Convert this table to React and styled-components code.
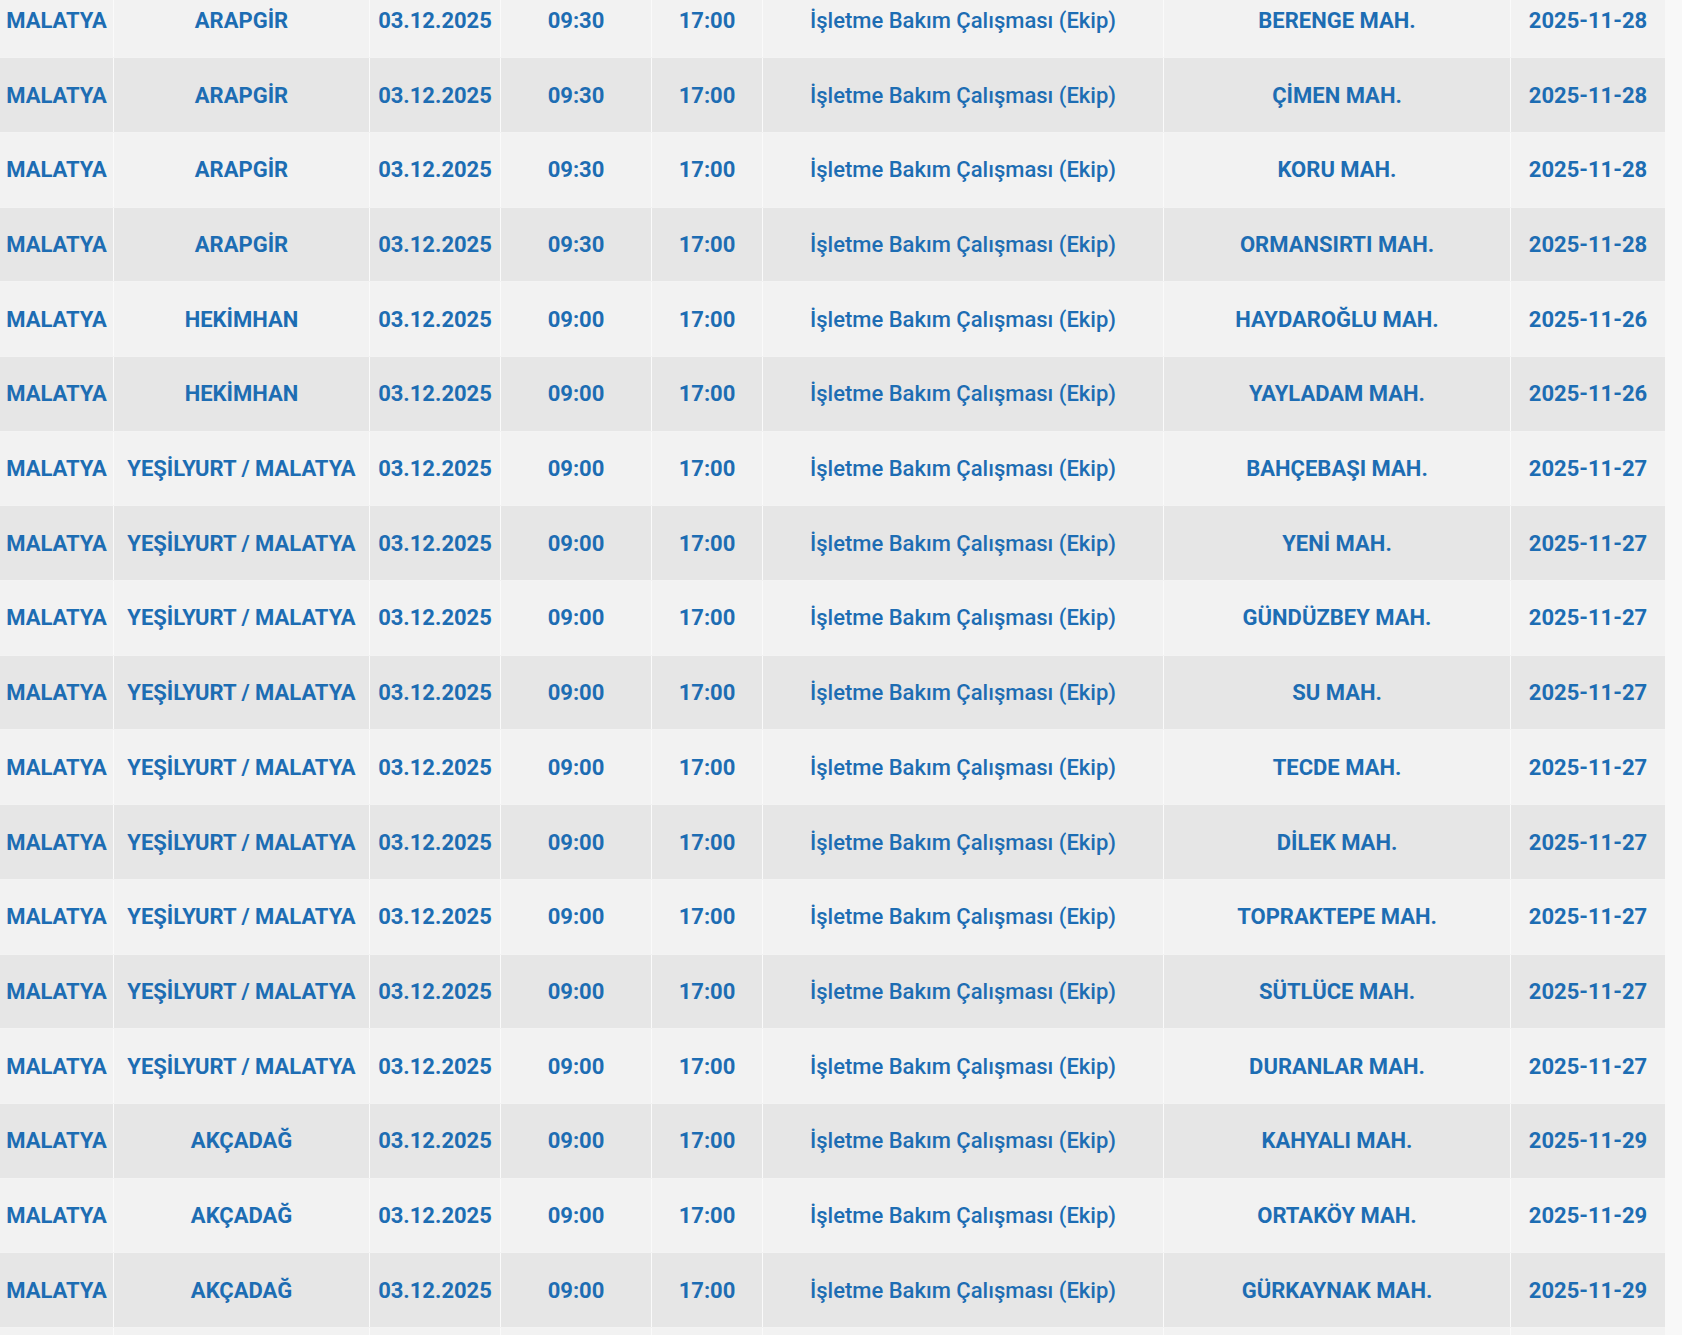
import styled, { createGlobalStyle } from "styled-components";

const Global = createGlobalStyle`
  html, body {
    margin: 0;
    padding: 0;
    background: #f8f8f8;
    overflow: hidden;
  }
`

const Page = styled.div`
  width: 1682px;
  height: 1335px;
  overflow: hidden;
  background: #f8f8f8;
`
const Table = styled.div`
  width: 1665px;
  margin-top: -16.4px;
  display: flex;
  flex-direction: column;
`
const Row = styled.div`
  display: grid;
  grid-template-columns: 113px 256px 131px 151px 111px 401px 347px 155px;
  height: 74.7px;
  box-sizing: border-box;
  background: ${props => props.$alt ? '#e6e6e6' : '#f2f2f2'};
  border-bottom: 1px solid #f3f3f3;
`
const Cell = styled.div`
  display: flex;
  align-items: center;
  justify-content: center;
  white-space: nowrap;
  border-left: ${props => props.$first ? 'none' : '1.5px solid #fafafa'};
  font-family: Roboto, "Noto Sans", sans-serif;
  font-size: 22px;
  font-weight: ${props => props.$weight || 700};
  color: #1d6db3;
`

const rows = [
  ['ARAPGİR', '09:30', 'BERENGE MAH.', '2025-11-28'],
  ['ARAPGİR', '09:30', 'ÇİMEN MAH.', '2025-11-28'],
  ['ARAPGİR', '09:30', 'KORU MAH.', '2025-11-28'],
  ['ARAPGİR', '09:30', 'ORMANSIRTI MAH.', '2025-11-28'],
  ['HEKİMHAN', '09:00', 'HAYDAROĞLU MAH.', '2025-11-26'],
  ['HEKİMHAN', '09:00', 'YAYLADAM MAH.', '2025-11-26'],
  ['YEŞİLYURT / MALATYA', '09:00', 'BAHÇEBAŞI MAH.', '2025-11-27'],
  ['YEŞİLYURT / MALATYA', '09:00', 'YENİ MAH.', '2025-11-27'],
  ['YEŞİLYURT / MALATYA', '09:00', 'GÜNDÜZBEY MAH.', '2025-11-27'],
  ['YEŞİLYURT / MALATYA', '09:00', 'SU MAH.', '2025-11-27'],
  ['YEŞİLYURT / MALATYA', '09:00', 'TECDE MAH.', '2025-11-27'],
  ['YEŞİLYURT / MALATYA', '09:00', 'DİLEK MAH.', '2025-11-27'],
  ['YEŞİLYURT / MALATYA', '09:00', 'TOPRAKTEPE MAH.', '2025-11-27'],
  ['YEŞİLYURT / MALATYA', '09:00', 'SÜTLÜCE MAH.', '2025-11-27'],
  ['YEŞİLYURT / MALATYA', '09:00', 'DURANLAR MAH.', '2025-11-27'],
  ['AKÇADAĞ', '09:00', 'KAHYALI MAH.', '2025-11-29'],
  ['AKÇADAĞ', '09:00', 'ORTAKÖY MAH.', '2025-11-29'],
  ['AKÇADAĞ', '09:00', 'GÜRKAYNAK MAH.', '2025-11-29'],
]

const App = () => {
  return (
    <Page>
      <Global/>
      <Table>
        {rows.map((r, i) => (
          <Row key={i} $alt={i % 2 == 1}>
            <Cell $first>MALATYA</Cell>
            <Cell>{r[0]}</Cell>
            <Cell>03.12.2025</Cell>
            <Cell>{r[1]}</Cell>
            <Cell>17:00</Cell>
            <Cell $weight={500}>İşletme Bakım Çalışması (Ekip)</Cell>
            <Cell>{r[2]}</Cell>
            <Cell>{r[3]}</Cell>
          </Row>
        ))}
        {/* next row, only its top edge shows */}
        <Row>
          <Cell $first/>
          <Cell/>
          <Cell/>
          <Cell/>
          <Cell/>
          <Cell/>
          <Cell/>
          <Cell/>
        </Row>
      </Table>
    </Page>
  )
};

export default App;
